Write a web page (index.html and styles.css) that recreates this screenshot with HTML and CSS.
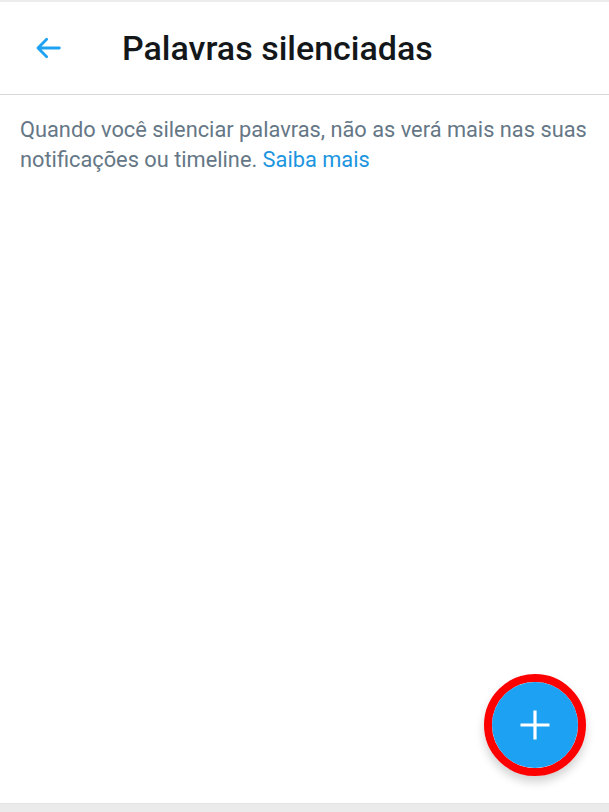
FILE: index.html
```html
<!DOCTYPE html>
<html lang="pt-BR">
<head>
  <meta charset="UTF-8" />
  <meta name="viewport" content="width=device-width, initial-scale=1.0"/>
  <title>Palavras silenciadas</title>
  <link rel="stylesheet" href="styles.css">
</head>
<body>
  <div class="screen">
    <header class="topbar">
      <button class="back" aria-label="Voltar">
        <svg width="32" height="32" viewBox="0 0 24 24">
          <path d="M20.5 12H4.5M11 5.5L4.5 12l6.5 6.5" fill="none" stroke="#1da1f2" stroke-width="2.1" stroke-linecap="round" stroke-linejoin="round"/>
        </svg>
      </button>
      <h1>Palavras silenciadas</h1>
    </header>

    <main class="content">
      <p class="info">Quando você silenciar palavras, não as verá mais nas suas notificações ou timeline. <a href="#">Saiba mais</a></p>
    </main>

    <div class="fab-ring">
      <button class="fab" aria-label="Adicionar">
        <svg width="30" height="30" viewBox="0 0 30 30">
          <path d="M15 0.5v29M0.5 15h29" stroke="#fff" stroke-width="3.2"/>
        </svg>
      </button>
    </div>

    <div class="navbar"></div>
  </div>
</body>
</html>
```

FILE: styles.css
```css
html, body {
  margin: 0;
  padding: 0;
  background: #fff;
}
body {
  font-family: Roboto, "Noto Sans", sans-serif;
  color: #14171a;
}
.screen {
  position: relative;
  width: 609px;
  height: 812px;
  display: flex;
  flex-direction: column;
  border-top: 2px solid #ececec;
  box-sizing: border-box;
}
.topbar {
  height: 93px;
  display: flex;
  align-items: center;
  border-bottom: 1px solid #d9d9d9;
  box-sizing: border-box;
  flex-shrink: 0;
}
.back {
  width: 56px;
  height: 56px;
  margin-left: 20px;
  padding: 0;
  border: none;
  background: none;
  display: flex;
  align-items: center;
  justify-content: center;
}
.topbar h1 {
  margin: 0 0 0 46px;
  font-size: 34px;
  font-weight: 500;
  color: #14171a;
}
.content {
  flex: 1;
  padding: 20px 10px 0 20px;
}
.info {
  margin: 0;
  font-size: 21.8px;
  line-height: 30px;
  color: #657786;
}
.info a {
  color: #1b95e0;
  text-decoration: none;
}
.fab-ring {
  position: absolute;
  right: 23px;
  bottom: 36px;
  width: 86px;
  height: 86px;
  border: 8px solid #ff0000;
  border-radius: 50%;
  box-shadow: 0 6px 10px rgba(0, 0, 0, 0.18);
}
.fab {
  width: 86px;
  height: 86px;
  border-radius: 50%;
  border: none;
  padding: 0;
  background: #1da1f2;
  display: flex;
  align-items: center;
  justify-content: center;
}
.navbar {
  height: 8px;
  background: #ebebeb;
  border-top: 1px solid #e4e4e4;
  flex-shrink: 0;
}
```
